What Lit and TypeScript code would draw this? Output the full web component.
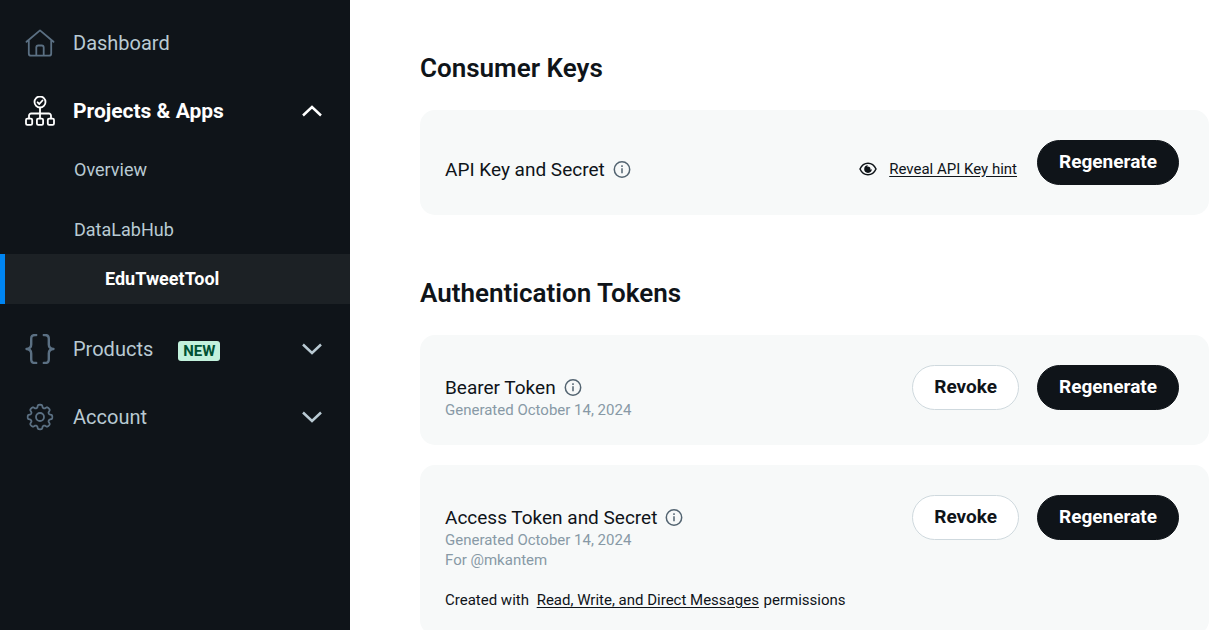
import { LitElement, html, css, svg, nothing } from "lit";
import { customElement, property } from "lit/decorators.js";
import { classMap } from "lit/directives/class-map.js";

const gearPath = (() => {
  const points: string[] = [];
  for (let i = 0; i < 160; i++) {
    const a = (i / 160) * Math.PI * 2;
    const r = 10.8 + 1.5 * Math.tanh(2 * Math.cos(8 * a) + 0.5);
    points.push(`${(15 + r * Math.sin(a)).toFixed(2)} ${(15 - r * Math.cos(a)).toFixed(2)}`);
  }
  return `M${points.join("L")}Z`;
})();

const icons = {
  home: svg`<path d="M1.5 13.8 15 2.4l13.5 11.4M3.8 12v13.4a2.3 2.3 0 0 0 2.3 2.3h17.8a2.3 2.3 0 0 0 2.3-2.3V12M11.3 27.5v-8a2 2 0 0 1 2-2h3.4a2 2 0 0 1 2 2v8"/>`,
  projects: svg`<circle cx="15" cy="6" r="5.5"/><path d="m12.6 6.3 1.7 1.7 3.2-3.5M15 11.7v10.6M4 22.3v-2.6a2.2 2.2 0 0 1 2.2-2.2h17.6a2.2 2.2 0 0 1 2.2 2.2v2.6"/><rect x="1" y="22.6" width="6.200" height="6.200" rx="1.3"/><rect x="11.9" y="22.6" width="6.200" height="6.200" rx="1.3"/><rect x="22.8" y="22.6" width="6.200" height="6.200" rx="1.3"/>`,
  braces: svg`<path d="M11.2 1H10C7.400 1 6.200 2.300 6.200 4.800v5.800c0 2.500-1.200 4.200-4.700 4.400 3.500.2 4.700 1.900 4.700 4.400v5.800c0 2.500 1.200 3.800 3.800 3.800h1.200M18.800 1H20c2.600 0 3.800 1.300 3.800 3.800v5.800c0 2.500 1.200 4.200 4.700 4.400-3.500.2-4.700 1.900-4.700 4.400v5.800c0 2.500-1.200 3.800-3.800 3.800h-1.200"/>`,
  gear: svg`<path d=${gearPath}/><circle cx="15" cy="15" r="4"/>`,
};

@customElement("info-icon")
class InfoIcon extends LitElement {
  static styles = css`
    :host { display: inline-flex; }
    svg { display: block; fill: none; stroke: #536471; stroke-width: 1.5; }
  `;
  render() {
    return html`<svg width="18" height="18" viewBox="0 0 18 18" aria-hidden="true">
      <circle cx="9" cy="8.500" r="7.700"/><path d="M9 7.300v5M9 4.300v1.700"/>
    </svg>`;
  }
}

@customElement("side-item")
class SideItem extends LitElement {
  @property() icon: keyof typeof icons = "home";
  @property() label = "";
  @property() badge = "";
  @property() chevron = "";
  @property({ type: Boolean }) current = false;

  static styles = css`
    :host { display: block; }
    a {
      display: flex; align-items: center; height: 68px; padding: 0 25px;
      color: #b9cad3; text-decoration: none; font-size: 20px; line-height: 24px;
    }
    .icon { width: 30px; height: 30px; margin-right: 18px; fill: none; stroke: #5b7083; stroke-width: 1.8; stroke-linecap: round; stroke-linejoin: round; }
    .braces { stroke-width: 2.4; }
    .current { height: 67px; color: #fff; font-size: 21px; font-weight: 700; }
    .current .icon { stroke: #fff; }
    .badge {
      margin: 4px 0 0 25px; padding: 0 5px; border-radius: 3px; background: #c2f1dc;
      color: #005133; font-size: 15px; line-height: 20px; font-weight: 700;
    }
    .chevron { width: 20px; height: 12px; margin: 0 3px 0 auto; fill: none; stroke: currentColor; stroke-width: 2.5; }
  `;
  render() {
    return html`<a href="#" class=${classMap({ current: this.current })}>
      <svg class="icon ${this.icon}" viewBox="0 0 30 30" aria-hidden="true">${icons[this.icon]}</svg>
      <span>${this.label}</span>
      ${this.badge ? html`<span class="badge">${this.badge}</span>` : nothing}
      ${this.chevron
        ? html`<svg class="chevron" viewBox="0 0 20 12" aria-hidden="true">
            <path d=${this.chevron === "up" ? "m1 10.5 9-8.500 9 8.500" : "m1 1.5 9 8.500 9-8.500"}/></svg>`
        : nothing}
    </a>`;
  }
}

@customElement("app-root")
class AppRoot extends LitElement {
  static styles = css`
    :host {
      display: flex; height: 100vh; overflow: hidden; background: #fff; color: #0f1419;
      font-family: Roboto, "Liberation Sans", sans-serif;
    }
    nav { box-sizing: border-box; flex: 0 0 350px; padding-top: 9px; background: #0f1419; }
    .sub { display: flex; flex-direction: column; padding: 2px 0 11px; }
    .sub a {
      padding-left: 74px; color: #b9cad3; font-size: 18px; line-height: 48px; text-decoration: none;
    }
    .sub a + a { margin-top: 12px; }
    .sub a.active {
      margin-top: 0; padding-left: 100px; border-left: 5px solid #0085f2;
      background: #1c2125; color: #fff; font-weight: 700; line-height: 50px;
    }
    main { flex: 1; min-width: 0; padding: 52px 4px 0 70px; overflow-y: auto; scrollbar-width: none; }
    section { margin-bottom: 62px; }
    h2 { margin: 0 0 26px; font-size: 26px; line-height: 32px; font-weight: 600; }
    .card {
      display: flex; justify-content: space-between; align-items: flex-start;
      min-height: 50px; padding: 30px 30px 25px 25px; border-radius: 15px; background: #f7f9f9;
    }
    .card + .card { margin-top: 20px; }
    .info { padding-top: 10px; }
    .single { padding-top: 17px; }
    h3 { display: flex; align-items: center; gap: 8px; margin: 0; font-size: 19px; line-height: 25px; font-weight: 400; }
    p { margin: 0; font-size: 15px; line-height: 20px; }
    .meta { color: #8899a6; }
    .perms { margin-top: 20px; }
    .perms a { margin: 0 1px 0 4px; }
    p a, .hint { color: inherit; text-decoration: underline; text-underline-offset: 2px; }
    .actions { display: flex; gap: 18px; }
    .hint {
      display: flex; align-items: center; gap: 12px; padding: 13px 2px 0 0; font-size: 15px; line-height: 20px;
    }
    .hint svg { width: 18px; height: 14px; }
    button {
      height: 45px; padding: 0 21px 2px; border: 1px solid #0f1419; border-radius: 23px;
      background: #0f1419; color: #fff; font: 700 19px/24px Roboto, "Liberation Sans", sans-serif;
    }
    button.light { border-color: #cfd9de; background: #fff; color: #0f1419; }
  `;

  render() {
    return html`
      <nav aria-label="Developer portal">
        <side-item icon="home" label="Dashboard"></side-item>
        <side-item icon="projects" label="Projects &amp; Apps" chevron="up" current></side-item>
        <div class="sub">
          <a href="#">Overview</a>
          <a href="#">DataLabHub</a>
          <a href="#" class="active" aria-current="page">EduTweetTool</a>
        </div>
        <side-item icon="braces" label="Products" badge="NEW" chevron="down"></side-item>
        <side-item icon="gear" label="Account" chevron="down"></side-item>
      </nav>
      <main>
        <section>
          <h2>Consumer Keys</h2>
          <div class="card">
            <div class="info single"><h3>API Key and Secret <info-icon></info-icon></h3></div>
            <div class="actions">
              <a class="hint" href="#">
                <svg viewBox="0 0 18 14" aria-hidden="true">
                  <path d="M1 7c1.700-3.700 4.500-5.800 8-5.800S15.300 3.300 17 7c-1.700 3.700-4.500 5.800-8 5.800S2.700 10.700 1 7z" fill="none" stroke="#0f1419" stroke-width="1.5"/>
                  <path d="M9 3.300a3.800 3.800 0 1 0 3.800 3.800A2 2 0 0 1 9 3.300z" fill="#0f1419"/>
                  <circle cx="8.700" cy="7.300" r="2.800" fill="#0f1419"/>
                </svg>
                <span>Reveal API Key hint</span>
              </a>
              <button type="button">Regenerate</button>
            </div>
          </div>
        </section>
        <section>
          <h2>Authentication Tokens</h2>
          <div class="card">
            <div class="info">
              <h3>Bearer Token <info-icon></info-icon></h3>
              <p class="meta">Generated October 14, 2024</p>
            </div>
            <div class="actions">
              <button type="button" class="light">Revoke</button>
              <button type="button">Regenerate</button>
            </div>
          </div>
          <div class="card">
            <div class="info">
              <h3>Access Token and Secret <info-icon></info-icon></h3>
              <p class="meta">Generated October 14, 2024</p>
              <p class="meta">For @mkantem</p>
              <p class="perms">Created with <a href="#">Read, Write, and Direct Messages</a> permissions</p>
            </div>
            <div class="actions">
              <button type="button" class="light">Revoke</button>
              <button type="button">Regenerate</button>
            </div>
          </div>
        </section>
      </main>
    `;
  }
}
